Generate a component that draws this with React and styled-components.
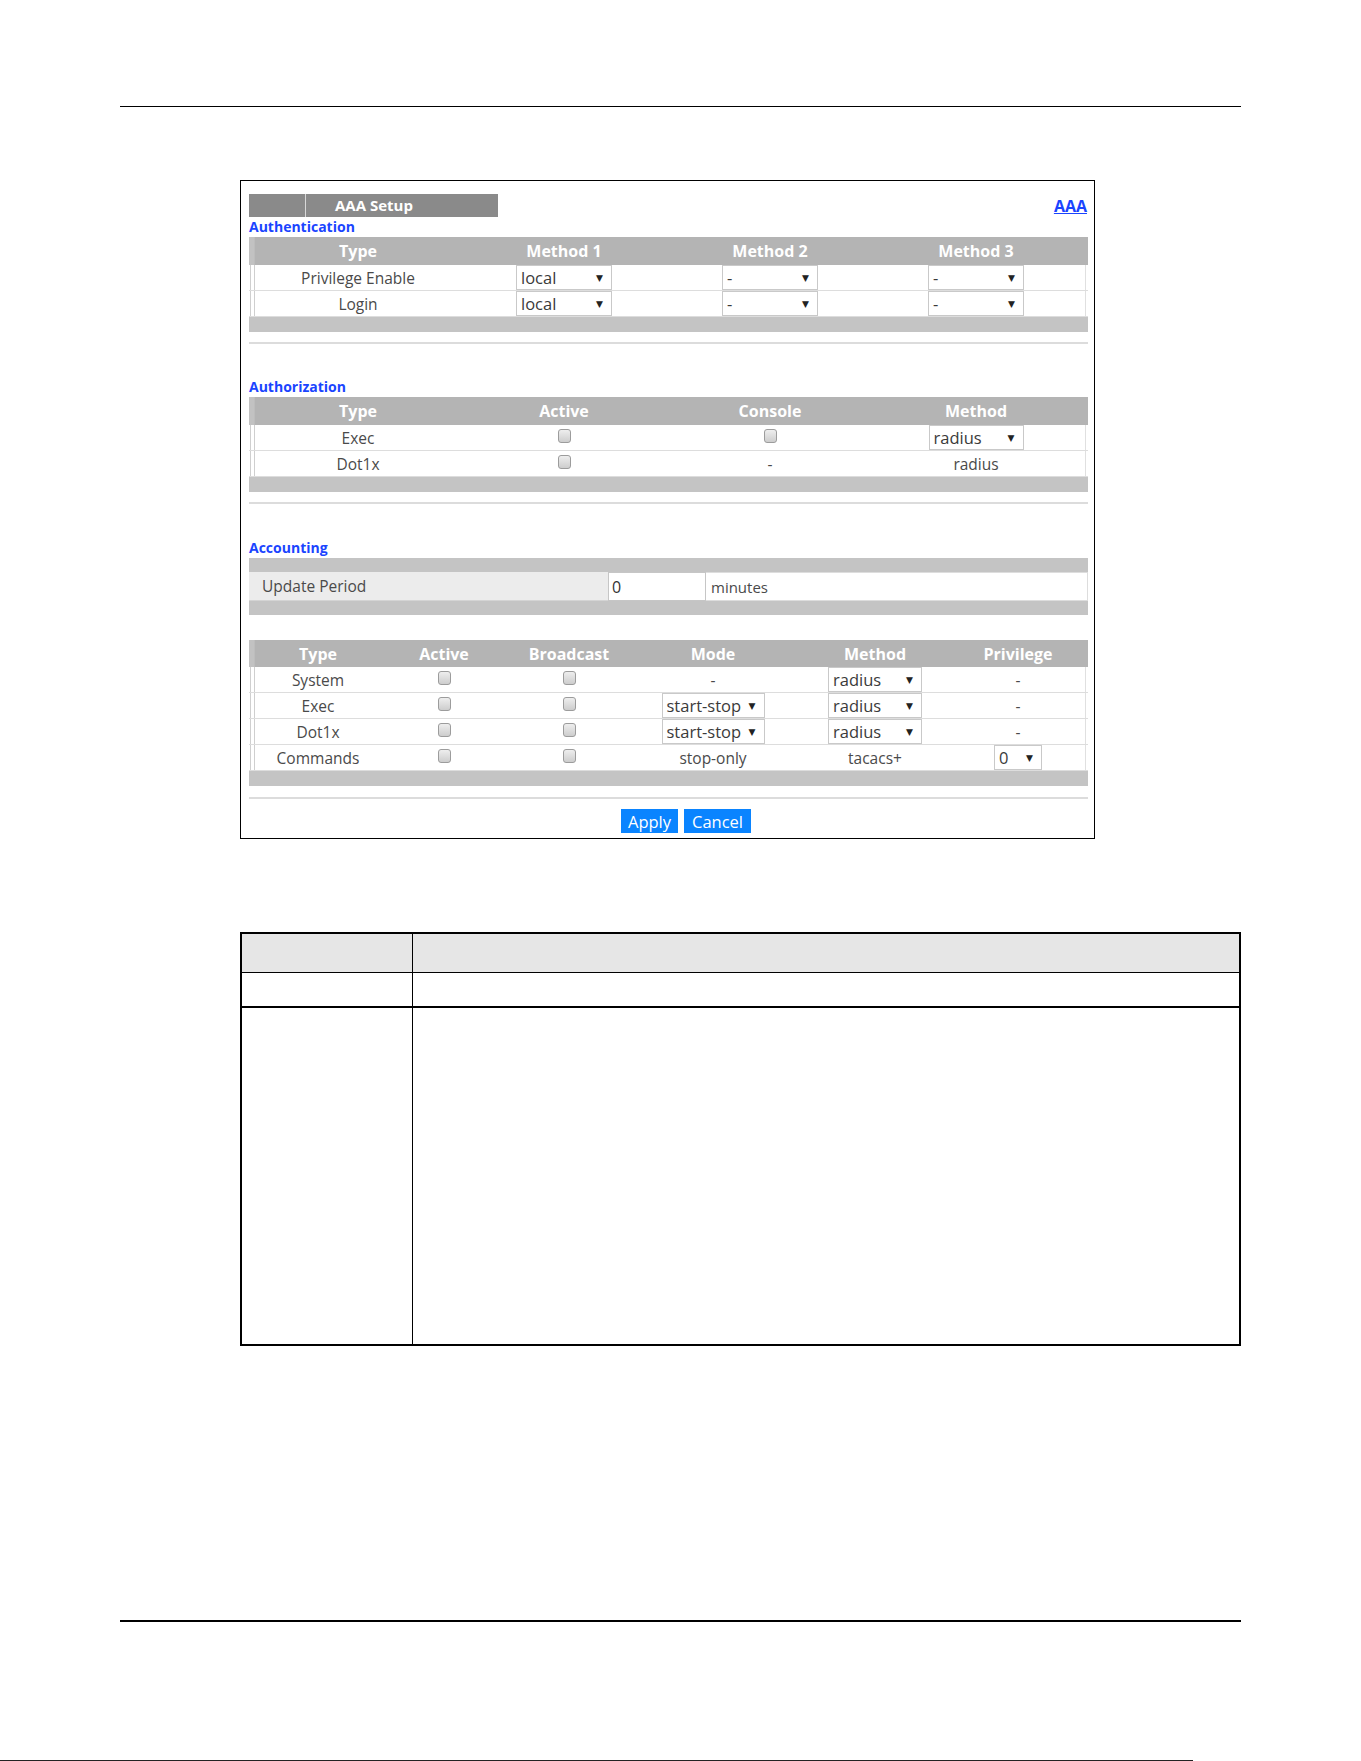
import React from "react";
import styled, { createGlobalStyle } from "styled-components";

const GlobalStyle = createGlobalStyle`
  html, body {
    margin: 0;
    padding: 0;
    background: #ffffff;
  }
  body {
    font-family: "Open Sans", "Liberation Sans", sans-serif;
  }
`;

const authRows = [
  { type: "Privilege Enable", methods: ["local", "-", "-"] },
  { type: "Login", methods: ["local", "-", "-"] },
];

const acctRows = [
  { type: "System", mode: null, method: { value: "radius" }, privilege: null },
  { type: "Exec", mode: "start-stop", method: { value: "radius" }, privilege: null },
  { type: "Dot1x", mode: "start-stop", method: { value: "radius" }, privilege: null },
  { type: "Commands", mode: "stop-only", method: { text: "tacacs+" }, privilege: "0" },
];

const AUTH_COLS = "6px 206px 206px 206px 206px 1fr";
const ACCT_COLS = "6px 126px 126px 124px 164px 160px 126px 1fr";

const Select = ({ value, width }) => (
  <SelectBox $w={width}>
    <span>{value}</span>
    <Caret>▼</Caret>
  </SelectBox>
);

const App = () => {
  return (
    <Page>
      <GlobalStyle />
      <Rule $top={106} $thick={1} />

      <Panel>
        <TitleBar>
          <Tab>
            <TabCap />
            <TabLabel>AAA Setup</TabLabel>
          </Tab>
          <NavLink href="#">AAA</NavLink>
        </TitleBar>

        <SectionLabel $top={0}>Authentication</SectionLabel>
        <HeadRow $cols={AUTH_COLS} $h={28}>
          <HeadStrip />
          <HeadCell>Type</HeadCell>
          <HeadCell>Method 1</HeadCell>
          <HeadCell>Method 2</HeadCell>
          <HeadCell>Method 3</HeadCell>
          <span />
        </HeadRow>
        {authRows.map((row) => (
          <BodyRow key={row.type} $cols={AUTH_COLS}>
            <Strip />
            <Cell>{row.type}</Cell>
            {row.methods.map((m, i) => (
              <Cell key={i}>
                <Select value={m} width={96} />
              </Cell>
            ))}
            <Filler />
          </BodyRow>
        ))}
        <FootBar $h={15} />
        <Divider $top={10} />

        <SectionLabel $top={33}>Authorization</SectionLabel>
        <HeadRow $cols={AUTH_COLS} $h={28}>
          <HeadStrip />
          <HeadCell>Type</HeadCell>
          <HeadCell>Active</HeadCell>
          <HeadCell>Console</HeadCell>
          <HeadCell>Method</HeadCell>
          <span />
        </HeadRow>
        <BodyRow $cols={AUTH_COLS}>
          <Strip />
          <Cell>Exec</Cell>
          <Cell><Check /></Cell>
          <Cell><Check /></Cell>
          <Cell><Select value="radius" width={95} /></Cell>
          <Filler />
        </BodyRow>
        <BodyRow $cols={AUTH_COLS}>
          <Strip />
          <Cell>Dot1x</Cell>
          <Cell><Check /></Cell>
          <Cell>-</Cell>
          <Cell>radius</Cell>
          <Filler />
        </BodyRow>
        <FootBar $h={15} />
        <Divider $top={10} />

        <SectionLabel $top={34}>Accounting</SectionLabel>
        <FootBar $h={14} />
        <PeriodRow>
          <PeriodLabel>Update Period</PeriodLabel>
          <PeriodInput>0</PeriodInput>
          <PeriodUnit>minutes</PeriodUnit>
        </PeriodRow>
        <FootBar $h={14} />

        <HeadRow $cols={ACCT_COLS} $h={27} $top={25}>
          <HeadStrip />
          <HeadCell>Type</HeadCell>
          <HeadCell>Active</HeadCell>
          <HeadCell>Broadcast</HeadCell>
          <HeadCell>Mode</HeadCell>
          <HeadCell>Method</HeadCell>
          <HeadCell>Privilege</HeadCell>
          <span />
        </HeadRow>
        {acctRows.map((row) => (
          <BodyRow key={row.type} $cols={ACCT_COLS}>
            <Strip />
            <Cell>{row.type}</Cell>
            <Cell><Check /></Cell>
            <Cell><Check /></Cell>
            <Cell>
              {row.mode === null ? "-" : row.mode === "start-stop" ? (
                <Select value="start-stop" width={103} />
              ) : (
                row.mode
              )}
            </Cell>
            <Cell>
              {row.method.value ? <Select value={row.method.value} width={94} /> : row.method.text}
            </Cell>
            <Cell>
              {row.privilege === null ? "-" : <Select value={row.privilege} width={48} />}
            </Cell>
            <Filler />
          </BodyRow>
        ))}
        <FootBar $h={15} />
        <Divider $top={11} />

        <ButtonRow>
          <ActionButton $w={57}>Apply</ActionButton>
          <ActionButton $w={67}>Cancel</ActionButton>
        </ButtonRow>
      </Panel>

      <DescTable>
        <DescHead />
        <DescHead $right />
        <DescCell $bottom={2} />
        <DescCell $bottom={2} $right />
        <DescCell />
        <DescCell $right />
      </DescTable>

      <Rule $top={274} $thick={2} />
      <EdgeLine />
    </Page>
  );
};

export default App;

const Page = styled.div`
  width: 1361px;
  height: 1761px;
  display: flex;
  flex-direction: column;
  overflow: hidden;
  background: #ffffff;
`;

const Rule = styled.div`
  margin: ${(p) => p.$top}px 0 0 120px;
  width: 1121px;
  height: ${(p) => p.$thick}px;
  background: #000000;
  flex-shrink: 0;
`;

const Panel = styled.div`
  margin: 73px 0 0 240px;
  width: 855px;
  height: 659px;
  box-sizing: border-box;
  border: 1px solid #000000;
  padding: 13px 6px 0 8px;
  display: flex;
  flex-direction: column;
  flex-shrink: 0;
`;

const TitleBar = styled.div`
  display: flex;
  justify-content: space-between;
  align-items: center;
  height: 23px;
`;

const Tab = styled.div`
  width: 249px;
  height: 23px;
  background: #8a8a8a;
  display: flex;
`;

const TabCap = styled.div`
  width: 56px;
  height: 100%;
  border-right: 1px solid #d8d8d8;
`;

const TabLabel = styled.div`
  padding-left: 29px;
  line-height: 23px;
  color: #ffffff;
  font-weight: 700;
  font-size: 15px;
`;

const NavLink = styled.a`
  color: #1a44ff;
  font-weight: 700;
  font-size: 16px;
  text-decoration: underline;
  margin: 1px 1px 0 0;
`;

const SectionLabel = styled.div`
  margin-top: ${(p) => p.$top}px;
  height: 20px;
  line-height: 20px;
  color: #1a44ff;
  font-weight: 700;
  font-size: 14px;
`;

const HeadRow = styled.div`
  display: grid;
  grid-template-columns: ${(p) => p.$cols};
  height: ${(p) => p.$h}px;
  margin-top: ${(p) => p.$top || 0}px;
  background: #b4b4b4;
`;

const HeadStrip = styled.div`
  background: #c2c2c2;
  border-right: 1px solid #bdbdbd;
`;

const HeadCell = styled.div`
  display: flex;
  align-items: center;
  justify-content: center;
  color: #ffffff;
  font-weight: 700;
  font-size: 16px;
`;

const BodyRow = styled.div`
  display: grid;
  grid-template-columns: ${(p) => p.$cols};
  height: 26px;
  box-sizing: border-box;
  border-bottom: 1px solid #dddddd;
  background: #ffffff;
`;

const Strip = styled.div`
  border-left: 1px solid #cfcfcf;
  border-right: 1px solid #cfcfcf;
  margin-left: 1px;
`;

const Filler = styled.div`
  border-right: 1px solid #e0e0e0;
  margin-right: 2px;
`;

const Cell = styled.div`
  display: flex;
  align-items: center;
  justify-content: center;
  font-size: 15.5px;
  color: #4a4a4a;
`;

const SelectBox = styled.div`
  width: ${(p) => p.$w}px;
  height: 25px;
  box-sizing: border-box;
  border: 1px solid #c9c9c9;
  background: #ffffff;
  display: flex;
  align-items: center;
  justify-content: space-between;
  padding: 0 8px 0 4px;
  font-size: 16.5px;
  color: #3a3a3a;
  white-space: nowrap;
`;

const Caret = styled.span`
  font-family: "DejaVu Sans", sans-serif;
  font-size: 9px;
  color: #222222;
`;

const Check = styled.span`
  display: block;
  width: 13px;
  height: 14px;
  box-sizing: border-box;
  border: 1px solid #9c9c9c;
  border-radius: 3px;
  background: linear-gradient(#eeeeee, #cdcdcd);
  margin-top: -3px;
`;

const FootBar = styled.div`
  height: ${(p) => p.$h}px;
  background: #c4c4c4;
`;

const Divider = styled.div`
  margin-top: ${(p) => p.$top}px;
  height: 2px;
  background: #dcdcdc;
`;

const PeriodRow = styled.div`
  display: grid;
  grid-template-columns: 359px 98px 1fr;
  height: 29px;
`;

const PeriodLabel = styled.div`
  background: #ececec;
  border-bottom: 1px solid #d4d4d4;
  padding-left: 13px;
  display: flex;
  align-items: center;
  font-size: 15.5px;
  color: #4a4a4a;
`;

const PeriodInput = styled.div`
  box-sizing: border-box;
  border: 1px solid #c6c6c6;
  background: #ffffff;
  padding-left: 3px;
  display: flex;
  align-items: center;
  font-size: 16px;
  color: #333333;
`;

const PeriodUnit = styled.div`
  box-sizing: border-box;
  border: 1px solid #dddddd;
  border-left: none;
  background: #ffffff;
  padding-left: 5px;
  display: flex;
  align-items: center;
  font-size: 15px;
  color: #4a4a4a;
`;

const ButtonRow = styled.div`
  display: flex;
  gap: 6px;
  margin-top: 10px;
  padding-left: 372px;
`;

const ActionButton = styled.button`
  width: ${(p) => p.$w}px;
  height: 24px;
  padding: 0;
  border: none;
  background: #0a84ff;
  color: #ffffff;
  font-family: "Open Sans", "Liberation Sans", sans-serif;
  font-size: 16.5px;
  white-space: nowrap;
`;

const DescTable = styled.div`
  margin: 93px 0 0 240px;
  width: 1001px;
  height: 414px;
  box-sizing: border-box;
  border: 2px solid #000000;
  display: grid;
  grid-template-columns: 170px 1fr;
  grid-template-rows: 39px 35px 1fr;
  flex-shrink: 0;
`;

const DescHead = styled.div`
  background: #e6e6e6;
  border-bottom: 1px solid #000000;
  border-left: ${(p) => (p.$right ? "1px solid #000000" : "none")};
`;

const DescCell = styled.div`
  border-bottom: ${(p) => (p.$bottom ? `${p.$bottom}px solid #000000` : "none")};
  border-left: ${(p) => (p.$right ? "1px solid #000000" : "none")};
`;

const EdgeLine = styled.div`
  margin-top: auto;
  width: 1193px;
  height: 1px;
  background: #222222;
  flex-shrink: 0;
`;
